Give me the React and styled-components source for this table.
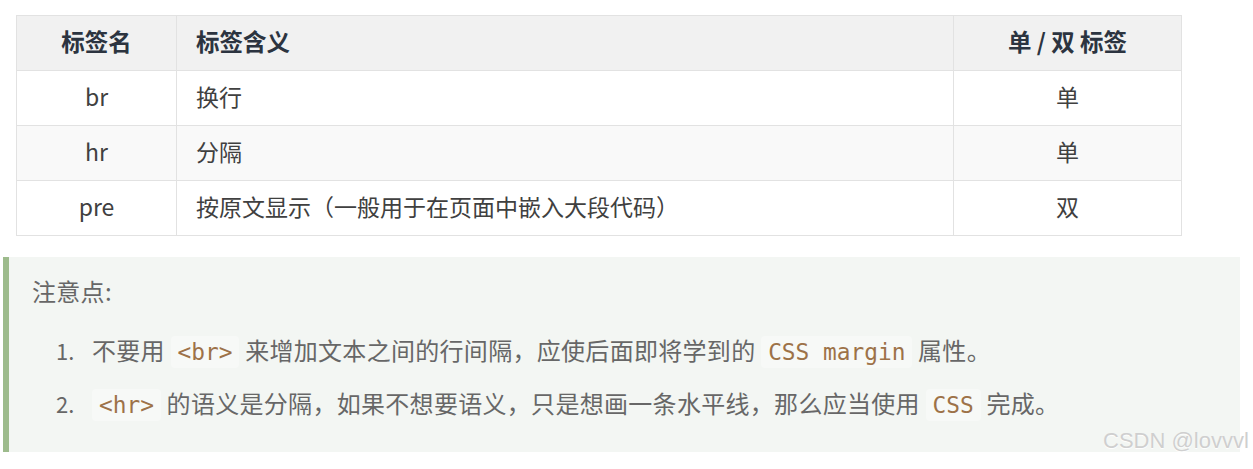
import React from "react";
import styled, { createGlobalStyle } from "styled-components";

const Global = createGlobalStyle`
  html, body { margin: 0; padding: 0; background: #ffffff; }
  body { font-family: "Noto Sans CJK SC", "Noto Sans", sans-serif; }
`;

const Page = styled.div`
  position: relative;
  width: 1253px;
  height: 469px;
  overflow: hidden;
  padding-top: 15px;
  box-sizing: border-box;
`;

const Table = styled.table`
  margin-left: 16px;
  width: 1166px;
  border-collapse: collapse;
  font-size: 23px;
  color: #404040;
`;

const HeadCell = styled.th`
  height: 55px;
  padding: 0 19px 4px;
  box-sizing: border-box;
  background: #f1f1f1;
  border: 1px solid #e2e2e2;
  font-weight: 700;
  font-size: 23.5px;
  color: #2c3440;
  text-align: ${(p) => p.$align || "left"};
  width: ${(p) => p.$w || "auto"};
`;

const Row = styled.tr`
  background: ${(p) => (p.$alt ? "#f9f9f9" : "#ffffff")};
`;

const Cell = styled.td`
  height: 55px;
  padding: 0 19px 4px;
  box-sizing: border-box;
  border: 1px solid #e2e2e2;
  text-align: ${(p) => p.$align || "left"};
`;

const Note = styled.div`
  margin: 21px 0 0 3px;
  width: 1237px;
  height: 195px;
  box-sizing: border-box;
  background: #f3f6f3;
  border-left: 6px solid #9dbb8c;
  padding: 14px 0 0 23px;
  color: #676767;
  font-size: 24px;
  letter-spacing: 0.3px;
`;

const NoteTitle = styled.div`
  line-height: 40px;
`;

const List = styled.div`
  margin-top: 12px;
  display: flex;
  flex-direction: column;
`;

const Item = styled.div`
  display: flex;
  align-items: center;
  height: 53px;
  padding-left: 24px;
`;

const Num = styled.span`
  width: 36px;
  flex: none;
  font-size: 22px;
  letter-spacing: 0;
`;

const Code = styled.code`
  font-family: "DejaVu Sans Mono", "Liberation Mono", monospace;
  font-size: 22.8px;
  letter-spacing: 0;
  color: #9d7248;
  background: rgba(255, 255, 255, 0.35);
  padding: 3px 7px;
  border-radius: 4px;
`;

const Watermark = styled.div`
  position: absolute;
  left: 1103px;
  top: 428px;
  font-family: "Liberation Sans", Arial, sans-serif;
  font-size: 22px;
  color: #cfcfcf;
  text-shadow: 0 1px 1px #ffffff;
  white-space: nowrap;
`;

export default function App() {
  return (
    <Page>
      <Global />
      <Table>
        <thead>
          <tr>
            <HeadCell $align="center" $w="160px">标签名</HeadCell>
            <HeadCell $w="777px">标签含义</HeadCell>
            <HeadCell $align="center">单 / 双 标签</HeadCell>
          </tr>
        </thead>
        <tbody>
          <Row>
            <Cell $align="center">br</Cell>
            <Cell>换行</Cell>
            <Cell $align="center">单</Cell>
          </Row>
          <Row $alt>
            <Cell $align="center">hr</Cell>
            <Cell>分隔</Cell>
            <Cell $align="center">单</Cell>
          </Row>
          <Row>
            <Cell $align="center">pre</Cell>
            <Cell>按原文显示（一般用于在页面中嵌入大段代码）</Cell>
            <Cell $align="center">双</Cell>
          </Row>
        </tbody>
      </Table>
      <Note>
        <NoteTitle>注意点:</NoteTitle>
        <List>
          <Item>
            <Num>1.</Num>
            <span>
              不要用 <Code>&lt;br&gt;</Code> 来增加文本之间的行间隔，应使后面即将学到的 <Code>CSS margin</Code> 属性。
            </span>
          </Item>
          <Item>
            <Num>2.</Num>
            <span>
              <Code>&lt;hr&gt;</Code> 的语义是分隔，如果不想要语义，只是想画一条水平线，那么应当使用 <Code>CSS</Code> 完成。
            </span>
          </Item>
        </List>
      </Note>
      <Watermark>CSDN @lovvvl</Watermark>
    </Page>
  );
}
